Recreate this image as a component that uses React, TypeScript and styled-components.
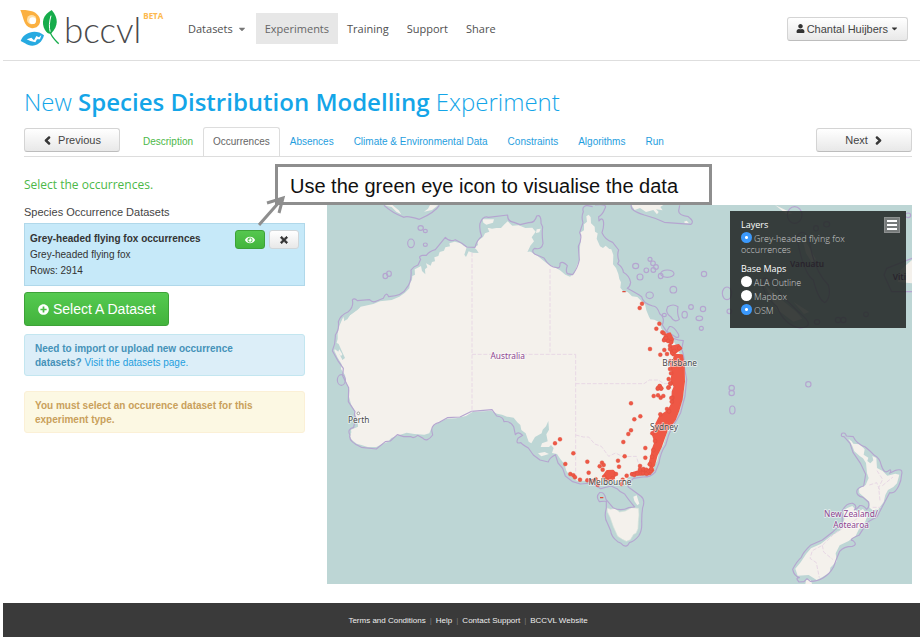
import React from "react";
import styled, { createGlobalStyle, css } from "styled-components";
import { FaCaretDown, FaChevronLeft, FaChevronRight, FaEye, FaPlusCircle, FaTimes, FaUser } from "react-icons/fa";

const sans = `"Liberation Sans", Arial, sans-serif`;
const open = `"Open Sans", sans-serif`;

const GlobalStyle = createGlobalStyle`
  *, *::before, *::after { box-sizing: border-box; }
  body { margin: 0; background: #fff; color: #444; font: 10px/16px ${sans}; }
  a { color: #1f9ede; text-decoration: none; }
  button { font-family: inherit; cursor: pointer; }
`;

const Page = styled.div`
  display: flex;
  flex-direction: column;
  min-height: 100vh;
  padding-left: 3px;
`;

/* ---------- header ---------- */

const Header = styled.header`
  display: flex;
  align-items: center;
  height: 61px;
  padding: 0 12px 3px 17px;
  border-bottom: 1px solid #dedede;
`;

const Brand = styled.a`
  display: flex;
  align-items: flex-start;
  width: 159px;
  color: #4a4a4c;
`;

const LeafMark = styled.svg`
  width: 40px;
  height: 38px;
  flex: none;
`;

const BrandName = styled.span`
  margin-left: 4px;
  font: 300 35px/40px Lato, sans-serif;
`;

const Beta = styled.sup`
  margin: 1px 0 0 2px;
  color: #fdb94e;
  font: 700 8px/12px ${open};
`;

const MainNav = styled.nav`
  display: flex;
  flex: 1;
`;

const NavLink = styled.a<{ $active?: boolean }>`
  display: flex;
  align-items: center;
  gap: 4px;
  height: 31px;
  padding: 0 9px;
  background: ${(p) => (p.$active ? "#e7e7e7" : "transparent")};
  color: ${(p) => (p.$active ? "#666" : "#505050")};
  font: 11px/16px ${open};

  svg { color: #777; font-size: 10px; }
`;

const Button = styled.button<{ $wide?: boolean }>`
  display: inline-flex;
  align-items: center;
  justify-content: center;
  gap: ${(p) => (p.$wide ? "6px" : "2px")};
  min-width: ${(p) => (p.$wide ? "96px" : "0")};
  height: 24px;
  padding: 0 8px;
  border: 1px solid #d4d4d4;
  border-bottom-color: #bdbdbd;
  border-radius: 3px;
  background: linear-gradient(#fff, #e8e8e8);
  color: #444;
  font-size: 11px;
  line-height: 16px;

  svg {
    color: #333;
    font-size: 9px;
    stroke: currentColor;
    stroke-width: ${(p) => (p.$wide ? "60px" : "0")};
    overflow: visible;
  }
`;

/* ---------- experiment heading and steps ---------- */

const Content = styled.main`
  position: relative;
  flex: 1;
  padding: 25px 8px 19px 21px;
`;

const Title = styled.h1`
  margin: 0;
  color: #14a5e8;
  font: 300 24px/32px ${open};

  strong { font-weight: 600; }
`;

const StepBar = styled.div`
  display: flex;
  align-items: flex-start;
  margin-top: 9px;
  padding-top: 1px;
  height: 30px;
  border-bottom: 1px solid #ddd;
`;

const Steps = styled.nav`
  display: flex;
  flex: 1;
  height: 29px;
  margin: -1px 0 0 13px;
`;

const Step = styled.a<{ $state?: "done" | "current" }>`
  height: 29px;
  padding: 6px 9px 0;
  border: 1px solid transparent;
  border-bottom: 0;
  border-radius: 3px 3px 0 0;
  ${(p) => p.$state === "done" && css`color: #4cb848;`}
  ${(p) => p.$state === "current" && css`
    border-color: #ddd;
    background: #fff;
    color: #666;
  `}
`;

const Columns = styled.div`
  display: grid;
  grid-template-columns: 281px minmax(0, 1fr);
  gap: 22px;
  align-items: start;
`;

const Sidebar = styled.section`
  padding-top: 19px;
`;

const Prompt = styled.h2`
  margin: 0;
  color: #4cb848;
  font: 400 12px/18px ${open};
`;

const ListTitle = styled.h3`
  margin: 10px 0 3px;
  font-weight: 400;
  font-size: 11px;
  line-height: 16px;
`;

const DatasetCard = styled.article`
  display: flex;
  justify-content: space-between;
  min-height: 63px;
  padding: 6px 5px;
  border: 1px solid #b0d8ea;
  background: #c6e9f9;
  color: #333;

  p { margin: 0; }
`;

const DatasetText = styled.div`
  padding-top: 1px;
`;

const Actions = styled.div`
  display: flex;
  gap: 4px;
`;

const IconButton = styled.button<{ $green?: boolean }>`
  display: flex;
  align-items: center;
  justify-content: center;
  width: 30px;
  height: 19px;
  padding: 0;
  border: 1px solid ${(p) => (p.$green ? "#3da238" : "#d0d6d9")};
  border-radius: 3px;
  background: ${(p) => (p.$green ? "linear-gradient(#55c74f, #42b53c)" : "linear-gradient(#fff, #e8e8e8)")};
  color: ${(p) => (p.$green ? "#fff" : "#333")};
  font-size: 10px;

  svg {
    stroke: currentColor;
    stroke-width: ${(p) => (p.$green ? "0" : "40px")};
    overflow: visible;
  }
`;

const SelectDataset = styled.button`
  display: flex;
  align-items: center;
  gap: 4px;
  height: 34px;
  margin: 6px 0 8px;
  padding: 0 12px 0 13px;
  border: 1px solid #3da238;
  border-radius: 3px;
  background: linear-gradient(#55ca50, #42b33c);
  color: #fff;
  font-size: 14px;
  line-height: 18px;

  svg { font-size: 11px; }
`;

const Notice = styled.p<{ $warning?: boolean }>`
  margin: 0 0 15px;
  padding: 7px 32px 5px 10px;
  border: 1px solid ${(p) => (p.$warning ? "#fbf0d6" : "#c3e6f0")};
  border-radius: 3px;
  background: ${(p) => (p.$warning ? "#fcf8e3" : "#dceef8")};
  color: ${(p) => (p.$warning ? "#c9a05b" : "#4592b8")};
  line-height: 14px;
`;

/* ---------- map ---------- */

const MapFrame = styled.section`
  position: relative;
  margin-top: 48px;
`;

const MapCanvas = styled.svg`
  display: block;
  width: 100%;
  background: #bdd6d5;
`;

const LayerPanel = styled.form`
  position: absolute;
  top: 6px;
  right: 6px;
  display: flex;
  justify-content: space-between;
  width: 176px;
  height: 117px;
  padding: 6px 6px 6px 11px;
  background: rgba(33, 38, 37, 0.87);
  color: #ccc;
  font: 300 9px/11px ${open};
`;

const LayerGroup = styled.fieldset`
  width: 116px;
  margin: 0 0 6px;
  padding: 0;
  border: 0;
`;

const GroupName = styled.legend`
  padding: 0;
  color: #fff;
  font-weight: 500;
  line-height: 15px;
`;

const LayerLabel = styled.label<{ $tall?: boolean }>`
  display: block;
  min-height: ${(p) => (p.$tall ? "14px" : "0")};
`;

const Radio = styled.input`
  appearance: none;
  width: 11px;
  height: 11px;
  margin: 0 2px 0 0;
  border-radius: 50%;
  background: #fff;
  vertical-align: -1px;

  &:checked { background: radial-gradient(circle, #fff 0 1px, #3b99fc 2px); }
`;

const MenuButton = styled.button`
  display: flex;
  flex-direction: column;
  justify-content: center;
  align-items: center;
  gap: 2px;
  width: 16px;
  height: 16px;
  padding: 0;
  border: 1px solid #8c8f8f;
  background: #777b7b;

  span { width: 10px; height: 2px; background: #fff; }
`;

/* ---------- callout over the page ---------- */

const Callout = styled.aside`
  position: absolute;
  top: 103px;
  left: 272px;
  width: 437px;
  height: 41px;
  padding: 4px 12px;
  border: 3px solid #8e8e8e;
  background: #fff;
  color: #111;
  font-size: 20px;
  line-height: 30px;
  white-space: nowrap;
`;

const CalloutArrow = styled.svg`
  position: absolute;
  top: 26px;
  left: -20px;
  width: 34px;
  height: 36px;
`;

const Footer = styled.footer`
  display: flex;
  justify-content: center;
  gap: 4px;
  padding: 10px 8px 8px 21px;
  background: #3a3a3a;
  color: #777;
  font-size: 8px;

  a { color: #eee; }
`;

/* ---------- map drawing data ---------- */

type Point = [number, number];

const mainland =
  "M53 400L58 378 70 350 73 362 82 358 90 346 112 330 122 320 160 312 180 304 215 300 238 290 255 278 268 265 270 248 276 240 277 228 285 224 284 208 296 202 303 198 306 213 316 223 315 208 322 202 318 190 332 197 336 186 345 184 343 172 355 168 359 156 372 152 376 142 390 139 388 130 404 125 420 129 431 137 440 142 433 164 438 171 446 154 457 158 476 159 470 149 463 143 474 135 472 124 489 111 495 100 508 95 503 84 520 84 543 84 552 74 563 64 577 77 596 76 616 84 637 83 647 95 635 112 642 124 631 137 625 151 638 159 652 167 665 178 684 193 704 202 720 211 736 224 750 230 763 220 771 196 777 184 779 153 782 118 780 98 792 91 792 73 801 65 799 49 806 44 812 52 813 70 824 80 825 95 833 100 830 116 840 139 849 144 857 137 868 147 874 148 880 165 879 193 888 204 895 222 898 237 903 247 901 263 909 273 923 276 936 289 952 291 964 303 975 313 979 331 987 350 991 358 1003 359 1017 366 1024 386 1034 398 1049 404 1060 422 1068 436 1078 441 1077 459 1086 465 1094 492 1096 525 1094 560 1087 596 1080 628 1069 656 1055 681 1041 698 1030 734 1017 758 1012 781 1002 799 1002 811 995 820 972 823 948 825 925 832 913 852 899 855 891 843 876 846 866 839 856 843 844 845 834 855 825 849 803 843 787 842 772 843 761 834 747 824 739 812 733 792 721 777 711 762 696 759 701 744 693 735 687 741 662 741 666 730 683 724 679 703 687 689 685 663 678 679 668 689 665 700 645 711 634 730 626 725 617 700 604 690 601 675 592 667 581 653 561 650 546 644 531 641 514 632 492 634 457 636 438 648 408 655 380 656 364 664 343 675 332 689 328 700 313 704 283 702 260 698 231 707 214 714 203 726 188 731 169 741 143 741 124 735 110 731 95 719 90 708 94 697 93 689 105 684 114 680 113 661 106 645 104 633 93 613 87 590 88 570 79 548 75 525 63 507 65 493 54 475 43 452 49 431 53 417Z";

const boundaries = [
  "M37 452Q47 430 46 405Q58 390 55 365Q61 345 85 335Q102 320 97 300Q102 292 112 302L149 299Q158 310 170 303L190 295Q199 273 206 290Q249 286 258 266Q276 248 273 210Q281 199 294 195L302 178Q294 169 307 166L319 166Q329 153 346 149L376 112Q388 127 406 119Q426 128 440 141L465 142Q470 121 485 109Q477 88 480 70Q489 46 505 52L563 45Q562 65 582 67L600 74 626 68Q645 69 650 48Q664 42 663 70L668 81Q665 102 669 130Q665 151 644 145Q632 153 645 163L672 174Q688 202 711 203Q721 206 720 190Q728 182 742 197Q736 212 742 221L758 224Q773 204 778 180L775 139Q788 113 779 98L789 68Q783 50 790 35Q785 20 800 16L818 20",
  "M825 15Q866 10 854 27Q848 44 836 50L837 63Q847 50 850 63Q853 78 846 98Q855 119 878 127L896 150Q890 164 897 183L893 191Q909 201 910 217Q928 227 932 247Q930 260 922 265Q953 282 965 290Q968 310 998 318Q1011 317 1019 341Q1036 353 1027 375L1046 404Q1058 420 1090 422L1085 448Q1094 469 1093 502L1100 538 1095 588 1082 638Q1071 661 1057 679Q1044 707 1037 735Q1022 756 1017 789Q1010 806 1006 816Q991 832 969 831L940 835Q926 850 924 860L962 888Q977 899 968 923Q965 940 965 965Q967 992 956 1008Q943 1024 928 1028Q919 1048 903 1030L893 1025Q873 1009 872 992L862 969Q851 952 859 924L859 903 838 905Q826 890 839 878Q853 874 858 898L879 923Q903 935 925 923L944 921Q923 896 914 882Q898 875 891 866L873 858 842 866 815 849 781 852 758 845 736 828 728 805 714 789 706 764Q687 774 685 786L660 780 640 765 625 744Q605 732 603 728Q585 733 594 715L608 706Q594 692 586 704L581 680Q571 662 552 665Q550 650 530 648L516 629 455 634 420 651 382 653 358 667Q336 672 335 690L338 705Q321 728 309 715L293 706Q280 717 273 710L251 710 232 704 211 723 196 725 169 747 124 742Q83 724 90 705Q80 688 101 682L107 653Q101 645 105 635L85 605 86 563 68 528 70 505 53 481 37 452",
  "M192 16Q217 39 252 52Q260 46 298 58Q345 37 358 16",
  "M934 15Q928 32 973 45Q1007 54 1033 67Q1074 70 1113 73Q1124 64 1105 50Q1075 46 1076 32L1079 16",
  "M1572 710Q1560 711 1566 700Q1576 696 1579 708L1600 710Q1609 731 1636 741Q1652 754 1663 766Q1679 775 1683 793Q1692 824 1706 812Q1715 805 1711 818Q1702 823 1724 812Q1750 803 1745 823Q1744 843 1736 858Q1724 883 1709 878Q1696 902 1686 922Q1679 935 1672 949Q1668 954 1659 957Q1645 964 1640 970Q1631 984 1617 1006Q1583 1020 1599 1022Q1614 1034 1597 1039Q1571 1039 1559 1054Q1548 1080 1541 1100Q1529 1122 1509 1134Q1493 1144 1471 1144L1461 1136 1452 1145 1437 1146Q1424 1133 1438 1133Q1422 1128 1418 1108Q1430 1084 1444 1072Q1449 1057 1471 1036L1507 1020 1539 995Q1554 980 1566 978Q1568 943 1565 936Q1578 908 1598 910Q1614 918 1603 930Q1613 926 1619 917Q1629 914 1640 928Q1650 920 1645 906L1629 892Q1607 887 1611 871Q1616 861 1631 858L1637 823 1622 791 1599 757 1590 730Z",
];

const tasmania = "M861 924L872 928 885 925 899 936 916 933 935 923 956 925 957 945 955 965 954 986 948 1000 941 1003 931 1019 919 1024 907 1018 893 1009 880 980 870 952 862 935Z";
const northIsland = "M1585 716L1595 724 1600 731 1619 733 1634 748 1631 764 1645 773 1642 783 1651 790 1660 781 1657 768 1669 774 1671 804 1688 813 1702 827 1726 821 1738 824 1731 850 1720 861 1704 870 1696 885 1691 906 1675 928 1658 931 1649 923 1648 905 1632 891 1618 879 1617 866 1637 855 1646 834 1641 820 1638 789 1629 775 1619 768 1603 754 1597 738Z";
const southIsland = "M1580 925L1597 918 1613 936 1629 927 1643 946 1635 967 1616 989 1607 1007 1586 1023 1559 1036 1547 1060 1550 1084 1531 1103 1529 1117 1509 1130 1490 1140 1466 1125 1433 1127 1426 1106 1442 1087 1459 1061 1473 1045 1502 1032 1534 1007 1561 991 1573 958 1571 935Z";
const papua = "M934 15L944 30 960 24 978 36 1000 30 1011 43 1016 36 1008 28 1028 31 1021 21 1030 15Z M1092 65L1100 62 1107 70 1095 70Z";
const timor = "M192 16L215 21 229 35 244 43 236 31 217 15Z M312 35L336 30 354 16 330 15 324 26Z";
const peninsulas = "M490 68L488 58 522 58 519 68 499 74Z M650 88L662 86 658 97 648 99Z M58 448L67 463 63 469 54 457Z M56 466L65 476 63 482 52 470Z M654 760L674 756 687 762 664 769Z M940 890L950 886 958 911 952 916 943 903Z";
const inlets = "M492 72L530 68 551 68 542 82 516 86 492 80Z M635 135L648 142 633 154 622 156Z M44 425L56 432 69 461 75 474 67 480 55 455 44 447Z M72 353L98 330 121 321 90 345 73 364Z";
const stateLines = "M456 158V636 M456 463H767 M690 207V463 M767 463V827 M767 551H972L988 540H1015L1031 551H1062 M767 705L790 711 806 711 824 732 844 739 866 769 887 759 908 770 949 769 955 789 988 811 M1648 855L1670 848 1679 870 M1671 812L1688 838 1676 863 1680 902 M1687 857L1719 831 M1658 922H1682 M1626 946L1541 1003 1507 1036 1477 1052 1470 1075 1489 1088 1498 1133 M1507 1036L1511 1056 1538 1078";

const reefs: [number, number, number, number][] = [
  [302, 84, 8, 7], [316, 93, 6, 5], [273, 130, 10, 13], [316, 134, 6, 5], [207, 221, 7, 8], [196, 228, 7, 8], [64, 540, 12, 16],
  [947, 198, 9, 8], [960, 231, 9, 9], [990, 178, 6, 6], [979, 211, 7, 7], [999, 190, 7, 7], [1000, 210, 7, 7], [1008, 201, 7, 7],
  [1022, 228, 7, 8], [1042, 221, 20, 11], [1060, 269, 10, 10], [989, 286, 11, 10], [1094, 344, 8, 10],
  [1033, 345, 6, 5], [1113, 321, 7, 7], [1138, 355, 10, 7], [1149, 327, 8, 8], [1152, 222, 8, 8], [1144, 385, 6, 6],
  [1221, 280, 14, 19], [1235, 564, 8, 8], [1235, 579, 8, 8], [1237, 630, 8, 12], [1465, 553, 8, 8],
  [1228, 334, 7, 7], [1764, 46, 8, 7], [1424, 45, 22, 25], [1488, 85, 7, 8], [1520, 73, 9, 8],
  [1491, 366, 8, 7], [1554, 360, 8, 8], [1570, 360, 8, 8], [1638, 343, 7, 7],
];

const northDots: Point[] = [
  [306, 311], [299, 324], [358, 371], [349, 386], [330, 447], [361, 464], [381, 462], [373, 450], [367, 397], [371, 400], [390, 437],
  [386, 537], [386, 562], [341, 588], [354, 586], [359, 559], [353, 566], [363, 566], [362, 593], [370, 588], [397, 593], [391, 484],
  [390, 507], [393, 520], [392, 551], [372, 421], [378, 414], [385, 423], [393, 427], [390, 447], [397, 460], [403, 453], [418, 445],
];

const southDots: Point[] = [
  [303, 70], [331, 109], [313, 118], [303, 151], [295, 162], [280, 186], [90, 178], [75, 190], [130, 220], [106, 252], [172, 245],
  [176, 278], [216, 248], [209, 259], [221, 255], [218, 269], [264, 242], [267, 260], [284, 229], [346, 204], [346, 233], [330, 258],
  [121, 282], [130, 286], [135, 292], [150, 299], [172, 301], [182, 303], [190, 303], [197, 298], [203, 314],
  [384, 24], [389, 18], [394, 25], [415, 23], [421, 10], [411, 87], [417, 94], [425, 65], [424, 54], [391, 103], [290, 287], [278, 299], [275, 312],
  [222, 291], [230, 300], [248, 295], [258, 282], [306, 283], [313, 285], [322, 281], [330, 268], [339, 279], [340, 267], [349, 269],
  [350, 281], [356, 274], [362, 272], [364, 266], [375, 183], [370, 210], [367, 160], [366, 230], [359, 253], [375, 149],
];

const denseBelt =
  "M1037 404L1050 400 1059 418 1057 428 1040 424 1029 419Z M1053 440L1076 435 1084 445 1071 454 1059 466 1052 456Z M1066 464L1086 466 1091 493 1092 545 1085 598 1075 632 1065 658 1052 676 1040 692 1032 714 1022 742 1010 766 1002 796 994 804 988 792 994 770 998 749 1006 726 998 702 1008 673 1020 649 1045 632 1057 610 1058 575 1064 560 1054 541 1058 520 1055 502 1052 483 1061 479Z M850 829L861 813 879 812 888 822 880 834 862 840Z M934 820L960 812 985 810 996 803 1000 811 990 822 960 824Z";

const AustraliaMap = () => (
  <MapCanvas viewBox="21 15 1755 1137" role="img" aria-label="Occurrence map of Australia and New Zealand">
    <g fill="#f4f1ec">
      <path d={mainland} />
      <path d={tasmania} stroke="#d5e2da" strokeWidth="2" />
      <path d={northIsland} />
      <path d={southIsland} />
      <path d={papua} />
      <path d={timor} />
      <path d="M1456 1152L1459 1138 1472 1140 1476 1152Z" />
    </g>
    <path d={inlets} fill="#bdd6d5" />
    <path d={peninsulas} fill="#f4f1ec" />
    <path d="M1445 110L1462 133 1488 178 1476 188 1458 160Z M1334 255L1386 300 1429 335 1447 356 1420 365 1370 328Z M1420 305L1468 336 1452 342Z M1741 210L1776 180V250L1733 246Z M1365 15L1417 40 1402 44Z" fill="#f4f1ec" />
    <g fill="none" stroke="#b5a5d0" strokeWidth="3.5" strokeLinejoin="round">
      {boundaries.map((d) => <path key={d.slice(0, 12)} d={d} />)}
      {reefs.map(([cx, cy, rx, ry]) => <ellipse key={`${cx}-${cy}`} cx={cx} cy={cy} rx={rx} ry={ry} />)}
      <path d="M1043 320Q1060 310 1074 320Q1070 340 1078 358Q1064 370 1052 350Q1034 338 1043 320Z M1048 380Q1060 376 1075 402Q1080 414 1068 412L1040 394Z" />
      <path d="M1330 235Q1350 230 1382 283L1440 340Q1490 380 1440 384Q1393 375 1371 320Q1320 280 1330 235Z M1430 110Q1450 80 1468 120Q1480 210 1525 255Q1535 290 1515 308Q1495 300 1480 240Q1450 220 1430 110Z M1776 175L1700 205 1692 225 1715 275H1776" />
    </g>
    <path d={stateLines} fill="none" stroke="#e8d8e5" strokeWidth="3" strokeDasharray="12 5" />
    <g fill="#ee5846" stroke="#dc4b3b" strokeWidth="1">
      <path d={denseBelt} strokeWidth="6" strokeLinejoin="round" stroke="#ee5846" />
      <g transform="translate(660 0)">{northDots.map(([x, y]) => <circle key={`${x}-${y}`} cx={x} cy={y} r="6" />)}</g>
      <g transform="translate(630 540)">{southDots.map(([x, y]) => <circle key={`${x}-${y}`} cx={x} cy={y} r="6" />)}</g>
      <path d="M907 275H917 M840 893H850" stroke="#dc4b3b" strokeWidth="4" />
    </g>
    <circle cx="115" cy="640" r="4" fill="#fff" stroke="#777" strokeWidth="2" />
    <g fontFamily='"Noto Sans", sans-serif' fontSize="25" textAnchor="middle" stroke="#fff" strokeOpacity=".65" strokeWidth="5" paintOrder="stroke" strokeLinejoin="round">
      <g fill="#4a4a4a">
        <text x="116" y="668">Perth</text>
        <text x="1079" y="498">Brisbane</text>
        <text x="1032" y="690">Sydney</text>
        <text x="870" y="854">Melbourne</text>
      </g>
      <g fill="#8d4590">
        <text x="563" y="478">Australia</text>
        <text x="1593" y="951">New Zealand/</text>
        <text x="1593" y="983">Aotearoa</text>
      </g>
      <g fill="#5a0a5c" strokeOpacity="0" fontWeight="600">
        <text x="1461" y="201">Vanuatu</text>
        <text x="1738" y="240">Viti</text>
      </g>
    </g>
  </MapCanvas>
);

const Logo = () => (
  <Brand href="#" aria-label="bccvl beta">
    <LeafMark viewBox="0 0 120 114" aria-hidden="true">
      <path d="M1 3C28 2 50 7 58 25C66 43 53 61 33 57C10 51 12 27 1 3Z" fill="#fbb040" />
      <circle cx="35" cy="32" r="14" fill="#ffe0a8" />
      <circle cx="38" cy="35" r="10" fill="#fff" />
      <path d="M95 3C70 17 62 40 75 63C82 75 91 76 94 73C115 51 116 27 95 3Z" fill="#16ac4b" />
      <path d="M93 20C88 38 86 54 91 70" fill="none" stroke="#fff" strokeWidth="3" />
      <path d="M90 68C94 84 104 92 116 104" fill="none" stroke="#16ac4b" strokeWidth="4" />
      <path d="M2 96C12 69 48 59 72 79C64 111 34 117 15 103Z" fill="#27aae1" />
      <path d="M20 91L34 86 42 94 49 81 57 85 64 78 60 91 51 91 46 100 31 96Z" fill="#fff" />
    </LeafMark>
    <BrandName>bccvl</BrandName>
    <Beta>BETA</Beta>
  </Brand>
);

const baseMaps = ["ALA Outline", "Mapbox", "OSM"];
const laterSteps = ["Absences", "Climate & Environmental Data", "Constraints", "Algorithms", "Run"];

export default function App() {
  return (
    <Page>
      <GlobalStyle />
      <Header>
        <Logo />
        <MainNav aria-label="Main">
          <NavLink href="#">Datasets <FaCaretDown /></NavLink>
          <NavLink href="#" $active>Experiments</NavLink>
          <NavLink href="#">Training</NavLink>
          <NavLink href="#">Support</NavLink>
          <NavLink href="#">Share</NavLink>
        </MainNav>
        <Button type="button"><FaUser />Chantal Huijbers<FaCaretDown /></Button>
      </Header>

      <Content>
        <Title>New <strong>Species Distribution Modelling</strong> Experiment</Title>
        <StepBar>
          <Button type="button" $wide><FaChevronLeft />Previous</Button>
          <Steps aria-label="Experiment steps">
            <Step href="#" $state="done">Description</Step>
            <Step href="#" $state="current" aria-current="step">Occurrences</Step>
            {laterSteps.map((name) => <Step href="#" key={name}>{name}</Step>)}
          </Steps>
          <Button type="button" $wide>Next<FaChevronRight /></Button>
        </StepBar>

        <Columns>
          <Sidebar>
            <Prompt>Select the occurrences.</Prompt>
            <ListTitle>Species Occurrence Datasets</ListTitle>
            <DatasetCard>
              <DatasetText>
                <p><strong>Grey-headed flying fox occurrences</strong></p>
                <p>Grey-headed flying fox</p>
                <p>Rows: 2914</p>
              </DatasetText>
              <Actions>
                <IconButton type="button" $green aria-label="View on map"><FaEye /></IconButton>
                <IconButton type="button" aria-label="Remove dataset"><FaTimes /></IconButton>
              </Actions>
            </DatasetCard>
            <SelectDataset type="button"><FaPlusCircle />Select A Dataset</SelectDataset>
            <Notice>
              <strong>Need to import or upload new occurrence datasets?</strong> <a href="#">Visit the datasets page.</a>
            </Notice>
            <Notice $warning><strong>You must select an occurence dataset for this experiment type.</strong></Notice>
          </Sidebar>

          <MapFrame>
            <AustraliaMap />
            <LayerPanel>
              <div>
                <LayerGroup>
                  <GroupName>Layers</GroupName>
                  <LayerLabel><Radio type="radio" name="layer" defaultChecked />Grey-headed flying fox occurrences</LayerLabel>
                </LayerGroup>
                <LayerGroup>
                  <GroupName>Base Maps</GroupName>
                  {baseMaps.map((name) => (
                    <LayerLabel $tall key={name}><Radio type="radio" name="base" defaultChecked={name === "OSM"} />{name}</LayerLabel>
                  ))}
                </LayerGroup>
              </div>
              <MenuButton type="button" aria-label="Toggle layers"><span /><span /><span /></MenuButton>
            </LayerPanel>
          </MapFrame>
        </Columns>

        <Callout>
          Use the green eye icon to visualise the data
          <CalloutArrow viewBox="0 0 34 36" fill="none" stroke="#8e8e8e" strokeWidth="3" aria-hidden="true">
            <path d="M1 32L23 7 M9 10L25 5 21 20" />
          </CalloutArrow>
        </Callout>
      </Content>

      <Footer>
        <a href="#">Terms and Conditions</a>|<a href="#">Help</a>|<a href="#">Contact Support</a>|<a href="#">BCCVL Website</a>
      </Footer>
    </Page>
  );
}
